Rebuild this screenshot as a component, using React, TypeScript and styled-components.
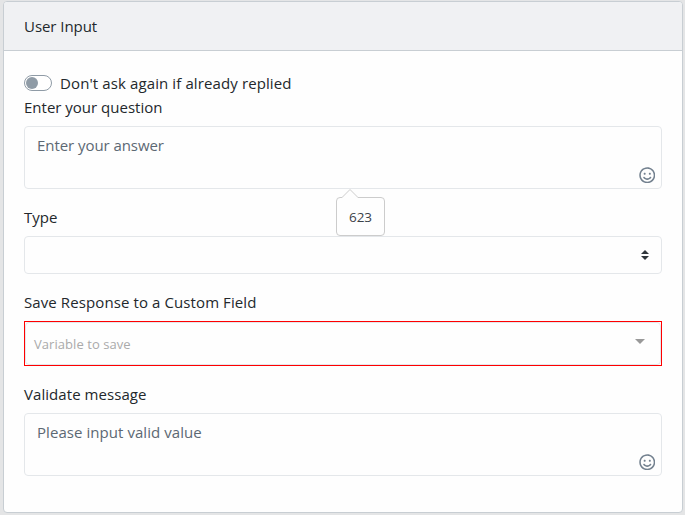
import React from "react";
import styled, { createGlobalStyle } from "styled-components";
import { FaRegSmile } from "react-icons/fa";

const GlobalStyle = createGlobalStyle`
  *, *::before, *::after { box-sizing: border-box; }
  body {
    margin: 0;
    background: #e4e5e6;
    color: #23282c;
    font-family: "Open Sans", "Noto Sans", sans-serif;
    font-size: 15px;
    line-height: 24px;
    overflow: hidden;
  }
`;

const Page = styled.main`
  height: 515px;
  padding: 1px 2px 2px 3px;
`;

const Card = styled.section`
  height: 512px;
  background: #fefefe;
  border: 1px solid #c8ced3;
  border-radius: 4px;
  overflow: hidden;
`;

const CardHeader = styled.header`
  height: 49px;
  padding: 12px 20px;
  background: #f0f1f3;
  border-bottom: 1px solid #c8ced3;
`;

const CardBody = styled.div`
  padding: 20px;
`;

const Text = styled.span<{ $spacing?: number }>`
  letter-spacing: ${(p) => p.$spacing ?? 0}px;
  white-space: nowrap;
`;

const SwitchRow = styled.div`
  display: flex;
  align-items: center;
  gap: 8px;
  height: 24px;
`;

const Switch = styled.button`
  width: 28px;
  height: 16px;
  padding: 1px;
  display: flex;
  background: #fff;
  border: 1px solid #8f9ba6;
  border-radius: 8px;
`;

const Knob = styled.span`
  width: 12px;
  height: 12px;
  border-radius: 50%;
  background: #8f9ba6;
`;

const Group = styled.div<{ $gap: number }>`
  margin-bottom: ${(p) => p.$gap}px;
`;

const Label = styled.label`
  display: block;
  height: 31px;
`;

const Area = styled.div`
  position: relative;
  height: 63px;
  padding: 6px 12px;
  color: #5c6873;
  border: 1px solid #e4e7ea;
  border-radius: 4px;
`;

const EmojiButton = styled.span`
  position: absolute;
  right: 5.7px;
  bottom: 5px;
  display: flex;
  font-size: 16.5px;
  color: #73818f;
`;

const SelectBox = styled.div`
  height: 38px;
  display: flex;
  align-items: center;
  justify-content: flex-end;
  padding-right: 12px;
  border: 1px solid #e4e7ea;
  border-radius: 4px;
`;

const InvalidFrame = styled.div`
  height: 45px;
  border: 1px solid #f00;
`;

const Combo = styled.div`
  height: 43px;
  display: flex;
  align-items: center;
  justify-content: space-between;
  padding: 0 15px 0 8px;
  border: 1px solid #e4e7ea;
  border-radius: 4px;
  font-size: 13px;
  color: #aaa;
`;

const Caret = styled.span`
  border: 5px solid transparent;
  border-top-color: #999;
  border-bottom-width: 0;
  margin-bottom: 4px;
`;

const Tip = styled.div`
  position: absolute;
  left: 311px;
  top: 70px;
  z-index: 2;
  width: 49px;
  height: 39px;
  display: flex;
  align-items: center;
  justify-content: center;
  font-size: 13.5px;
  color: #3c4248;
  background: #fefefe;
  border: 1px solid #ccc;
  border-radius: 4px;
`;

const TipArrow = styled.svg`
  position: absolute;
  left: 5px;
  top: -9px;
`;

type AreaProps = { text: string; spacing: number; count?: number };

function MessageArea({ text, spacing, count }: AreaProps) {
  return (
    <Area>
      <Text $spacing={spacing}>{text}</Text>
      <EmojiButton><FaRegSmile /></EmojiButton>
      {count !== undefined && (
        <Tip>
          <TipArrow width="16" height="10" viewBox="0 0 16 10">
            <path d="M0 8.5 8 .5l8 8V10H0Z" fill="#fefefe" />
            <path d="M0 8.5 8 .5l8 8" fill="none" stroke="#ccc" />
          </TipArrow>
          {count}
        </Tip>
      )}
    </Area>
  );
}

export default function App() {
  return (
    <>
      <GlobalStyle />
      <Page>
        <Card>
          <CardHeader><Text $spacing={-0.05}>User Input</Text></CardHeader>
          <CardBody>
            <SwitchRow>
              <Switch role="switch" aria-checked="false"><Knob /></Switch>
              <Text $spacing={0.11}>Don't ask again if already replied</Text>
            </SwitchRow>
            <Group $gap={16}>
              <Label><Text>Enter your question</Text></Label>
              <MessageArea text="Enter your answer" spacing={-0.06} count={623} />
            </Group>
            <Group $gap={16}>
              <Label><Text>Type</Text></Label>
              <SelectBox>
                <svg width="8" height="10" viewBox="0 0 8 10" fill="#2f353a">
                  <path d="M0 4 4 0l4 4ZM0 6l4 4 4-4Z" />
                </svg>
              </SelectBox>
            </Group>
            <Group $gap={16}>
              <Label><Text $spacing={0.1}>Save Response to a Custom Field</Text></Label>
              <InvalidFrame>
                <Combo><Text $spacing={0.06}>Variable to save</Text><Caret /></Combo>
              </InvalidFrame>
            </Group>
            <Group $gap={0}>
              <Label><Text $spacing={0.06}>Validate message</Text></Label>
              <MessageArea text="Please input valid value" spacing={0.06} />
            </Group>
          </CardBody>
        </Card>
      </Page>
    </>
  );
}
